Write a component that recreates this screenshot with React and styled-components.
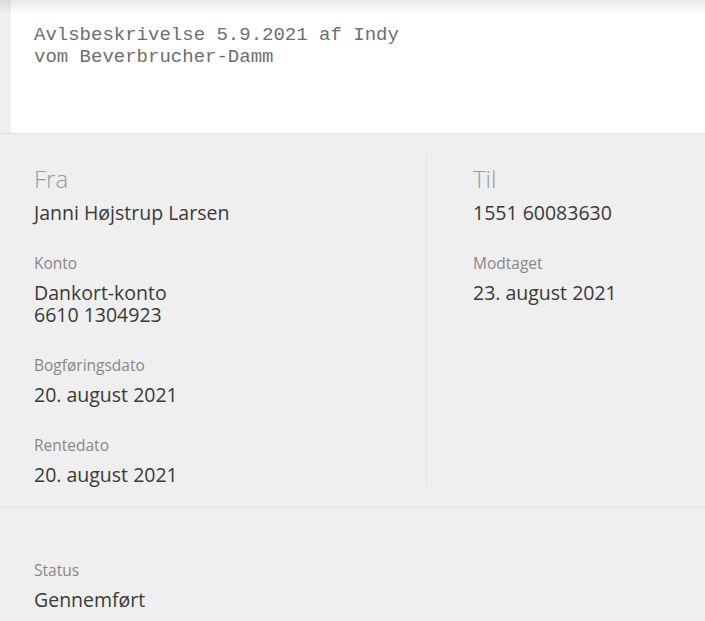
import React from "react";
import styled, { createGlobalStyle } from "styled-components";

const Global = createGlobalStyle`
  html, body { margin: 0; padding: 0; background: #efefef; }
  body { font-family: "Open Sans", "Noto Sans", sans-serif; color: #333; }
`;

const Page = styled.div`
  position: relative;
  width: 705px;
  min-height: 621px;
  background: #efefef;
  overflow: hidden;
  &::after {
    content: "";
    position: absolute;
    left: 0; right: 0; top: 0;
    height: 14px;
    background: linear-gradient(to bottom, rgba(0,0,0,0.09), rgba(0,0,0,0));
    pointer-events: none;
  }
`;

const Header = styled.div`
  border-bottom: 1px solid #e3e3e3;
  padding-left: 11px;
`;

const NoteBox = styled.div`
  background: #fff;
  height: 133px;
  box-sizing: border-box;
  padding: 24px 0 0 23px;
  font-family: "Liberation Mono", monospace;
  font-size: 19px;
  line-height: 22px;
  color: #6e6e6e;
  white-space: pre-line;
`;

const Details = styled.div`
  display: grid;
  grid-template-columns: 427px 1fr;
  padding: 22px 0 21px;
  border-bottom: 1px solid #e3e3e3;
`;

const Column = styled.div`
  padding: 9px 0 0 ${p => (p.$right ? 46 : 34)}px;
  border-right: ${p => (p.$right ? "none" : "1px solid #e2e2e2")};
`;

const Heading = styled.div`
  font-size: 24px;
  font-weight: 300;
  line-height: 28px;
  color: #9a9a9a;
  margin-bottom: 9px;
`;

const Field = styled.div`
  margin-top: 29px;
`;

const Label = styled.div`
  font-size: 15.5px;
  line-height: 21px;
  color: #888;
  margin-bottom: 8px;
`;

const Value = styled.div`
  font-size: 19.5px;
  line-height: 22px;
  color: #3a3a3a;
`;

const ValueLine = styled.span`
  display: block;
`;

const StatusSection = styled.div`
  padding: 52px 0 0 34px;
`;

export default function App() {
  return (
    <Page>
      <Global />
      <Header>
        <NoteBox>{"Avlsbeskrivelse 5.9.2021 af Indy\nvom Beverbrucher-Damm"}</NoteBox>
      </Header>
      <Details>
        <Column>
          <Heading>Fra</Heading>
          <Value>Janni Højstrup Larsen</Value>
          <Field>
            <Label>Konto</Label>
            <Value>
              <ValueLine>Dankort-konto</ValueLine>
              <ValueLine>6610 1304923</ValueLine>
            </Value>
          </Field>
          <Field>
            <Label>Bogføringsdato</Label>
            <Value>20. august 2021</Value>
          </Field>
          <Field>
            <Label>Rentedato</Label>
            <Value>20. august 2021</Value>
          </Field>
        </Column>
        <Column $right>
          <Heading>Til</Heading>
          <Value>1551 60083630</Value>
          <Field>
            <Label>Modtaget</Label>
            <Value>23. august 2021</Value>
          </Field>
        </Column>
      </Details>
      <StatusSection>
        <Label>Status</Label>
        <Value>Gennemført</Value>
      </StatusSection>
    </Page>
  );
}
